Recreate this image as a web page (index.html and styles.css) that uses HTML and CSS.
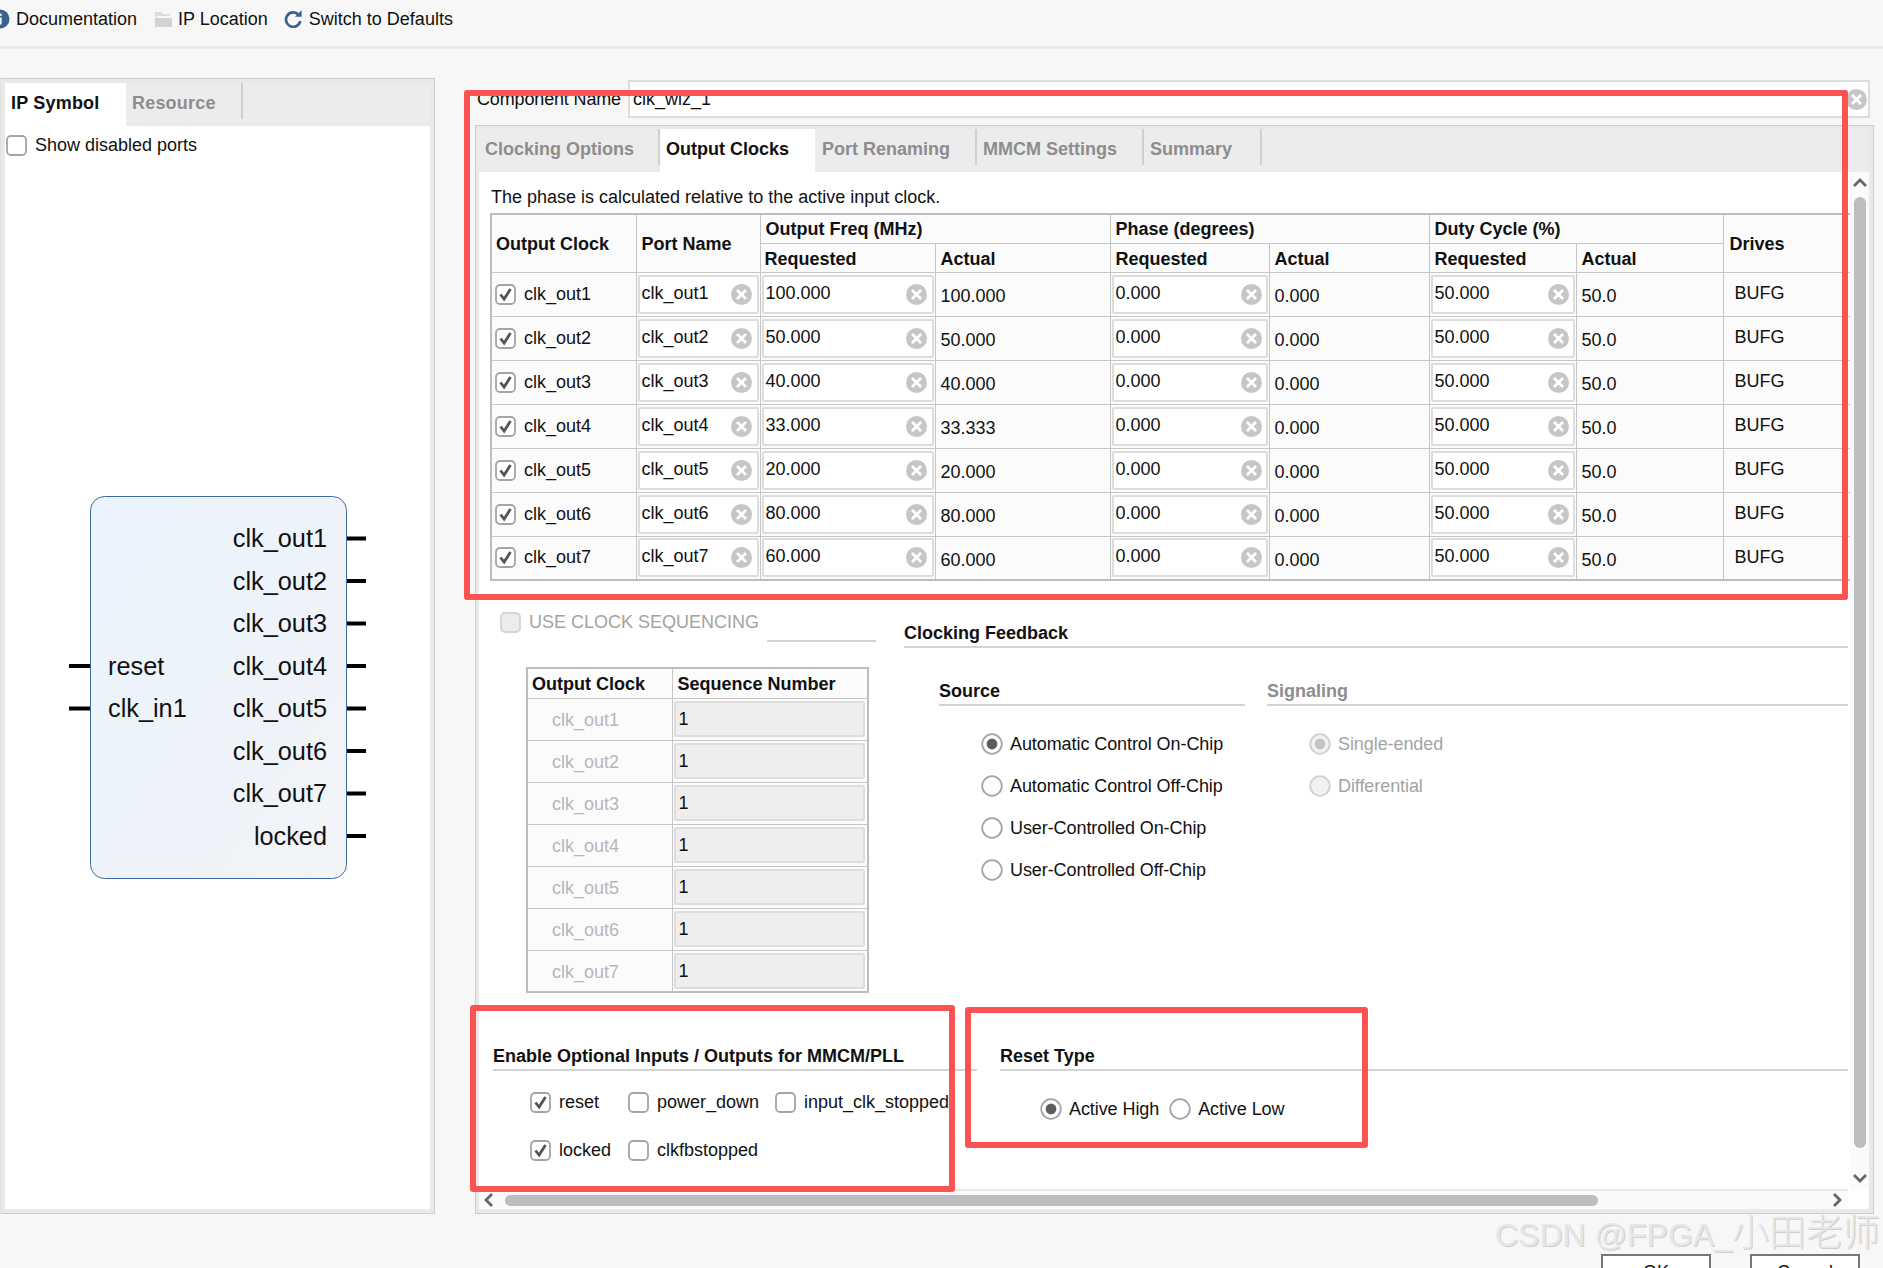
FILE: index.html
```html
<!DOCTYPE html>
<html lang="en">
<head>
<meta charset="utf-8">
<title>Clocking Wizard</title>
<link rel="stylesheet" href="styles.css">
</head>
<body>
<svg class="defs" width="0" height="0">
  <symbol id="x" viewBox="0 0 21 21"><circle cx="10.5" cy="10.5" r="10.5" fill="#c6c6c6"/><path d="M6 6l9 9M15 6l-9 9" stroke="#fff" stroke-width="2.8" fill="none"/></symbol>
  <symbol id="on" viewBox="0 0 21 21"><rect x="1" y="1" width="19" height="19" rx="4" fill="#fff" stroke="#a4a4a4" stroke-width="1.8"/><path d="M5.5 10.5l3.6 4.6L15.5 5" fill="none" stroke="#555" stroke-width="2.8"/></symbol>
  <symbol id="off" viewBox="0 0 21 21"><rect x="1" y="1" width="19" height="19" rx="4" fill="#fff" stroke="#a4a4a4" stroke-width="1.8"/></symbol>
  <symbol id="dis" viewBox="0 0 21 21"><rect x="1" y="1" width="19" height="19" rx="4" fill="#ececec" stroke="#d4d4d4" stroke-width="1.8"/></symbol>
  <symbol id="r0" viewBox="0 0 22 22"><circle cx="11" cy="11" r="9.8" fill="#fff" stroke="#a4a4a4" stroke-width="1.8"/></symbol>
  <symbol id="r1" viewBox="0 0 22 22"><circle cx="11" cy="11" r="9.8" fill="#fff" stroke="#a4a4a4" stroke-width="1.8"/><circle cx="11" cy="11" r="5.4" fill="#5c5c5c"/></symbol>
  <symbol id="r2" viewBox="0 0 22 22"><circle cx="11" cy="11" r="9.8" fill="#f2f2f2" stroke="#d0d0d0" stroke-width="1.8"/></symbol>
  <symbol id="r3" viewBox="0 0 22 22"><circle cx="11" cy="11" r="9.8" fill="#f2f2f2" stroke="#d0d0d0" stroke-width="1.8"/><circle cx="11" cy="11" r="5.4" fill="#c4c4c4"/></symbol>
</svg>
<div class="page">
  <header class="toolbar">
    <span class="tool tool-doc"><svg class="ic-info" viewBox="0 0 20 20"><circle cx="10" cy="10" r="9.5" fill="#3c6190"/><rect x="9" y="8.500" width="2.600" height="7" fill="#fff"/><rect x="9" y="4.500" width="2.600" height="2.500" fill="#fff"/></svg>Documentation</span>
    <span class="tool tool-loc"><svg class="ic-16" viewBox="0 0 18 18"><path d="M1 2h6l2 2h7v2H3L1 8z" fill="#dcdcdc"/><path d="M1 8h17v9H1z" fill="#d2d2d2"/></svg>IP Location</span>
    <span class="tool tool-def"><svg class="ic-16" viewBox="0 0 18 18"><path d="M14.600 4.800A7.200 7.200 0 1 0 16.300 11" fill="none" stroke="#3c6190" stroke-width="2.700"/><path d="M11 6.800h6.600V.2z" fill="#3c6190"/></svg>Switch to Defaults</span>
  </header>

  <main class="main">
    <section class="left">
      <nav class="ltabs">
        <span class="ltab ltab-on">IP Symbol</span>
        <span class="ltab ltab-off">Resource</span>
      </nav>
      <div class="lbody">
        <label class="check show"><svg class="cb"><use href="#off"/></svg>Show disabled ports</label>
        <svg class="symbol" width="300" height="390" viewBox="0 0 300 390">
          <defs><linearGradient id="sg" x1="0" y1="0" x2="1" y2="1"><stop offset="0" stop-color="#eaf3fd"/><stop offset="1" stop-color="#f2f4f7"/></linearGradient></defs>
          <rect x="24.500" y="2.500" width="256" height="382" rx="14" fill="url(#sg)" stroke="#3f6aa6"/>
          <g class="pins">
            <path d="M281 44.500h19M281 87h19M281 129.500h19M281 172h19M281 214.500h19M281 257h19M281 299.500h19M281 342h19M3 172h21M3 214.500h21"/>
          </g>
          <g class="portr">
            <text x="261" y="53">clk_out1</text><text x="261" y="96">clk_out2</text><text x="261" y="138">clk_out3</text><text x="261" y="181">clk_out4</text><text x="261" y="223">clk_out5</text><text x="261" y="266">clk_out6</text><text x="261" y="308">clk_out7</text><text x="261" y="351">locked</text>
          </g>
          <g class="portl"><text x="42" y="181">reset</text><text x="42" y="223">clk_in1</text></g>
        </svg>
      </div>
    </section>

    <section class="right">
      <div class="compname">
        <span class="complabel">Component Name</span>
        <div class="compfield">clk_wiz_1<svg class="clr"><use href="#x"/></svg></div>
      </div>
      <div class="wizard">
        <nav class="tabs">
          <span class="tab t1">Clocking Options</span>
          <span class="tab t2">Output Clocks</span>
          <span class="tab t3">Port Renaming</span>
          <span class="tab t4">MMCM Settings</span>
          <span class="tab t5">Summary</span>
        </nav>
        <div class="scrollrow">
          <div class="content">
            <p class="note">The phase is calculated relative to the active input clock.</p>
            <table class="clocks">
              <colgroup><col class="c1"><col class="c2"><col class="c3"><col class="c3"><col class="c4"><col class="c5"><col class="c6"><col class="c6"><col class="c7"></colgroup>
              <thead>
                <tr class="h1"><th rowspan="2">Output Clock</th><th rowspan="2">Port Name</th><th colspan="2">Output Freq (MHz)</th><th colspan="2">Phase (degrees)</th><th colspan="2">Duty Cycle (%)</th><th rowspan="2" class="drv">Drives</th></tr>
                <tr class="h2"><th>Requested</th><th>Actual</th><th>Requested</th><th>Actual</th><th>Requested</th><th>Actual</th></tr>
              </thead>
              <tbody>
                <tr><td><label class="check rowc"><svg class="cb"><use href="#on"/></svg>clk_out1</label></td><td><div class="fld">clk_out1<svg class="clr"><use href="#x"/></svg></div></td><td><div class="fld">100.000<svg class="clr"><use href="#x"/></svg></div></td><td class="act">100.000</td><td><div class="fld">0.000<svg class="clr"><use href="#x"/></svg></div></td><td class="act">0.000</td><td><div class="fld">50.000<svg class="clr"><use href="#x"/></svg></div></td><td class="act">50.0</td><td class="bufg">BUFG</td></tr>
                <tr><td><label class="check rowc"><svg class="cb"><use href="#on"/></svg>clk_out2</label></td><td><div class="fld">clk_out2<svg class="clr"><use href="#x"/></svg></div></td><td><div class="fld">50.000<svg class="clr"><use href="#x"/></svg></div></td><td class="act">50.000</td><td><div class="fld">0.000<svg class="clr"><use href="#x"/></svg></div></td><td class="act">0.000</td><td><div class="fld">50.000<svg class="clr"><use href="#x"/></svg></div></td><td class="act">50.0</td><td class="bufg">BUFG</td></tr>
                <tr><td><label class="check rowc"><svg class="cb"><use href="#on"/></svg>clk_out3</label></td><td><div class="fld">clk_out3<svg class="clr"><use href="#x"/></svg></div></td><td><div class="fld">40.000<svg class="clr"><use href="#x"/></svg></div></td><td class="act">40.000</td><td><div class="fld">0.000<svg class="clr"><use href="#x"/></svg></div></td><td class="act">0.000</td><td><div class="fld">50.000<svg class="clr"><use href="#x"/></svg></div></td><td class="act">50.0</td><td class="bufg">BUFG</td></tr>
                <tr><td><label class="check rowc"><svg class="cb"><use href="#on"/></svg>clk_out4</label></td><td><div class="fld">clk_out4<svg class="clr"><use href="#x"/></svg></div></td><td><div class="fld">33.000<svg class="clr"><use href="#x"/></svg></div></td><td class="act">33.333</td><td><div class="fld">0.000<svg class="clr"><use href="#x"/></svg></div></td><td class="act">0.000</td><td><div class="fld">50.000<svg class="clr"><use href="#x"/></svg></div></td><td class="act">50.0</td><td class="bufg">BUFG</td></tr>
                <tr><td><label class="check rowc"><svg class="cb"><use href="#on"/></svg>clk_out5</label></td><td><div class="fld">clk_out5<svg class="clr"><use href="#x"/></svg></div></td><td><div class="fld">20.000<svg class="clr"><use href="#x"/></svg></div></td><td class="act">20.000</td><td><div class="fld">0.000<svg class="clr"><use href="#x"/></svg></div></td><td class="act">0.000</td><td><div class="fld">50.000<svg class="clr"><use href="#x"/></svg></div></td><td class="act">50.0</td><td class="bufg">BUFG</td></tr>
                <tr><td><label class="check rowc"><svg class="cb"><use href="#on"/></svg>clk_out6</label></td><td><div class="fld">clk_out6<svg class="clr"><use href="#x"/></svg></div></td><td><div class="fld">80.000<svg class="clr"><use href="#x"/></svg></div></td><td class="act">80.000</td><td><div class="fld">0.000<svg class="clr"><use href="#x"/></svg></div></td><td class="act">0.000</td><td><div class="fld">50.000<svg class="clr"><use href="#x"/></svg></div></td><td class="act">50.0</td><td class="bufg">BUFG</td></tr>
                <tr><td><label class="check rowc"><svg class="cb"><use href="#on"/></svg>clk_out7</label></td><td><div class="fld">clk_out7<svg class="clr"><use href="#x"/></svg></div></td><td><div class="fld">60.000<svg class="clr"><use href="#x"/></svg></div></td><td class="act">60.000</td><td><div class="fld">0.000<svg class="clr"><use href="#x"/></svg></div></td><td class="act">0.000</td><td><div class="fld">50.000<svg class="clr"><use href="#x"/></svg></div></td><td class="act">50.0</td><td class="bufg">BUFG</td></tr>
              </tbody>
            </table>

            <div class="lower">
              <div class="seqcol">
                <div class="seqhead">
                  <label class="check seqcheck"><svg class="cb"><use href="#dis"/></svg>USE CLOCK SEQUENCING</label>
                  <span class="seqline"></span>
                </div>
                <table class="seq">
                  <colgroup><col class="s1"><col class="s2"></colgroup>
                  <thead><tr><th>Output Clock</th><th>Sequence Number</th></tr></thead>
                  <tbody>
                    <tr><td class="sname">clk_out1</td><td><div class="sfld">1</div></td></tr>
                    <tr><td class="sname">clk_out2</td><td><div class="sfld">1</div></td></tr>
                    <tr><td class="sname">clk_out3</td><td><div class="sfld">1</div></td></tr>
                    <tr><td class="sname">clk_out4</td><td><div class="sfld">1</div></td></tr>
                    <tr><td class="sname">clk_out5</td><td><div class="sfld">1</div></td></tr>
                    <tr><td class="sname">clk_out6</td><td><div class="sfld">1</div></td></tr>
                    <tr><td class="sname">clk_out7</td><td><div class="sfld">1</div></td></tr>
                  </tbody>
                </table>
              </div>
              <div class="fbcol">
                <h3 class="title">Clocking Feedback</h3>
                <div class="fbrow">
                  <div class="source">
                    <h3 class="title">Source</h3>
                    <div class="radios">
                      <label class="radio"><svg class="rd"><use href="#r1"/></svg>Automatic Control On-Chip</label>
                      <label class="radio"><svg class="rd"><use href="#r0"/></svg>Automatic Control Off-Chip</label>
                      <label class="radio"><svg class="rd"><use href="#r0"/></svg>User-Controlled On-Chip</label>
                      <label class="radio"><svg class="rd"><use href="#r0"/></svg>User-Controlled Off-Chip</label>
                    </div>
                  </div>
                  <div class="signal">
                    <h3 class="title title-off">Signaling</h3>
                    <div class="radios radios-sig">
                      <label class="radio radio-off"><svg class="rd"><use href="#r3"/></svg>Single-ended</label>
                      <label class="radio radio-off"><svg class="rd"><use href="#r2"/></svg>Differential</label>
                    </div>
                  </div>
                </div>
              </div>
            </div>

            <div class="bottom">
              <div class="opt">
                <h3 class="title">Enable Optional Inputs / Outputs for MMCM/PLL</h3>
                <div class="optgrid">
                  <label class="check"><svg class="cb"><use href="#on"/></svg>reset</label>
                  <label class="check"><svg class="cb"><use href="#off"/></svg>power_down</label>
                  <label class="check"><svg class="cb"><use href="#off"/></svg>input_clk_stopped</label>
                  <label class="check"><svg class="cb"><use href="#on"/></svg>locked</label>
                  <label class="check"><svg class="cb"><use href="#off"/></svg>clkfbstopped</label>
                </div>
              </div>
              <div class="rst">
                <h3 class="title">Reset Type</h3>
                <div class="rstrow">
                  <label class="radio"><svg class="rd"><use href="#r1"/></svg>Active High</label>
                  <label class="radio"><svg class="rd"><use href="#r0"/></svg>Active Low</label>
                </div>
              </div>
            </div>
          </div>
          <div class="vscroll">
            <svg class="chev" viewBox="0 0 14 9"><path d="M1 8l6-6 6 6" fill="none" stroke="#666" stroke-width="2.800"/></svg>
            <span class="vthumb"></span>
            <svg class="chev" viewBox="0 0 14 9"><path d="M1 1l6 6 6-6" fill="none" stroke="#666" stroke-width="2.800"/></svg>
          </div>
        </div>
        <div class="hrow">
          <div class="hscroll">
            <svg class="chevh" viewBox="0 0 9 14"><path d="M8 1L2 7l6 6" fill="none" stroke="#666" stroke-width="2.800"/></svg>
            <span class="hthumb"></span>
            <svg class="chevh" viewBox="0 0 9 14"><path d="M1 1l6 6-6 6" fill="none" stroke="#666" stroke-width="2.800"/></svg>
          </div>
          <span class="corner"></span>
        </div>
      </div>
    </section>
  </main>

  <footer class="foot">
    <button class="btn">OK</button>
    <button class="btn">Cancel</button>
  </footer>

  <span class="mark m1"></span>
  <span class="mark m2"></span>
  <span class="mark m3"></span>
  <span class="wm">CSDN @FPGA_<span class="wmc">小田老师</span></span>
</div>
</body>
</html>
```

FILE: styles.css
```css
* { box-sizing: border-box; }
html, body { margin: 0; padding: 0; }
body { font-family: "Liberation Sans", Arial, "Noto Sans CJK SC", sans-serif; font-size: 18px; color: #111; background: #f7f7f7; }
.defs { position: absolute; }
.page { position: relative; width: 1883px; height: 1268px; overflow: hidden; display: flex; flex-direction: column; background: #f7f7f7; }

.toolbar { height: 49px; flex: none; display: flex; align-items: flex-start; border-bottom: 3px solid #ebebeb; padding-top: 9px; }
.tool { display: flex; align-items: center; height: 20px; white-space: nowrap; }
.tool-doc { margin-left: -10px; }
.ic-info { width: 20px; height: 20px; margin-right: 6px; }
.ic-16 { width: 18px; height: 18px; margin-right: 6px; }
.tool-loc { margin-left: 17px; }
.tool-def { margin-left: 16px; }
.tool-def .ic-16 { margin-right: 7px; }

.main { display: flex; gap: 41px; padding-top: 29px; flex: none; height: 1165px; }

.left { width: 435px; height: 1136px; border: 1px solid #cdcdcd; border-left-color: #e0e0e0; padding: 4px; background: #e9e9e9; display: flex; flex-direction: column; }
.ltabs { display: flex; height: 43px; flex: none; background: #ececec; align-items: flex-start; font-weight: bold; letter-spacing: .2px; }
.ltab { display: block; line-height: 40px; padding-left: 6px; }
.ltab-on { width: 121px; height: 43px; background: #fff; color: #111; }
.ltab-off { width: 117px; height: 36px; color: #8d8d8d; border-right: 2px solid #cfcfcf; }
.lbody { flex: 1; background: #fff; padding: 9px 0 0 1px; }

.check { display: flex; align-items: center; gap: 8px; white-space: nowrap; height: 21px; }
.cb { width: 21px; height: 21px; flex: none; }
.symbol { display: block; margin: 338px 0 0 60px; }
.pins path { stroke: #000; stroke-width: 4; fill: none; }
.portr text, .portl text { font-family: "Liberation Sans", Arial, sans-serif; font-size: 25.3px; fill: #111; }
.portr text { text-anchor: end; }

.right { width: 1399px; margin-left: -1px; display: flex; flex-direction: column; }
.compname { display: flex; align-items: center; height: 38px; margin-top: 2px; padding-left: 2px; flex: none; }
.complabel { width: 151px; white-space: nowrap; letter-spacing: -.15px; }
.compfield { width: 1242px; height: 38px; background: #fff; border: 2px solid #ddd; display: flex; align-items: center; justify-content: space-between; padding-left: 3px; padding-right: 1px; }
.clr { width: 21px; height: 21px; flex: none; }

.wizard { margin-top: 7px; height: 1089px; flex: none; border: 1px solid #cdcdcd; padding: 3px 4px 4px 3px; background: #e9e9e9; display: flex; flex-direction: column; }
.tabs { display: flex; height: 43px; flex: none; background: #ececec; align-items: flex-start; font-weight: bold; }
.tab { display: block; height: 36px; line-height: 40px; color: #8d8d8d; border-right: 2px solid #cfcfcf; padding-left: 6px; white-space: nowrap; }
.t1 { width: 181px; }
.t2 { width: 155px; height: 43px; background: #fff; color: #111; border: 0; }
.t3 { width: 162px; padding-left: 7px; }
.t4 { width: 167px; }
.t5 { width: 118px; }

.scrollrow { display: flex; height: 1017px; flex: none; }
.content { width: 1371px; background: #fff; padding: 16px 0 0 11px; overflow: hidden; flex: none; }
.note { margin: 0 0 6px 1px; line-height: 19px; white-space: nowrap; }

table { border-collapse: collapse; table-layout: fixed; background: #fbfbfb; }
th { font-weight: bold; text-align: left; padding: 2px 0 0 5px; white-space: nowrap; }
th, td { border: 1px solid #c6c6c6; }
.clocks { width: 1360px; border: 2px solid #bdbdbd; }
.c1 { width: 145px; } .c2 { width: 124px; } .c3 { width: 175px; } .c4 { width: 159px; } .c5 { width: 160px; } .c6 { width: 147px; } .c7 { width: 128px; }
.h1 { height: 29px; }
.h2 { height: 29px; }
.clocks .h2 th { padding-top: 4px; }
.clocks th:first-child { padding-left: 4px; }
.clocks th.drv { padding-left: 6px; }
.clocks td { height: 44px; padding: 0; white-space: nowrap; }
.rowc { padding-left: 3px; }
.fld { height: 39px; margin: 0 1px; background: #fff; border: 2px solid #ddd; border-radius: 2px; display: flex; align-items: center; justify-content: space-between; padding: 0 4px 2px 2px; }
.clocks td:nth-child(2) .fld, .clocks td:nth-child(3) .fld { padding-right: 5px; }
.fld .clr { margin-top: 2px; }
.clocks td.act { padding: 5px 0 0 5px; }
.clocks td.bufg { padding: 0 0 1px 11px; }

.lower { display: flex; }
.seqcol { width: 414px; flex: none; }
.seqhead { display: flex; align-items: flex-end; height: 61px; }
.seqcheck { color: #a3a3a3; margin: 0 0 9px 10px; }
.seqline { width: 109px; height: 2px; background: #d4d4d4; margin-left: 8px; }
.seq { width: 341px; margin: 25px 0 0 36px; border: 2px solid #bdbdbd; }
.s1 { width: 145px; } .s2 { width: 196px; }
.seq th { height: 30px; }
.seq th:first-child { padding-left: 4px; }
.seq td { height: 42px; padding: 0; }
.seq td.sname { color: #b7b7b7; padding: 3px 0 0 24px; }
.sfld { height: 36px; margin: 2px 2px 2px 1px; background: #eee; border: 2px solid #ddd; border-radius: 2px; line-height: 32px; padding-left: 3px; }

.title { margin: 0; font-size: 18px; font-weight: bold; line-height: 20px; padding-bottom: 3px; border-bottom: 2px solid #d4d4d4; white-space: nowrap; }
.title-off { color: #8d8d8d; }
.fbcol { width: 944px; flex: none; padding-top: 42px; }
.fbrow { display: flex; gap: 22px; padding: 33px 0 0 35px; }
.source { width: 306px; flex: none; }
.signal { flex: 1; }
.radios { display: flex; flex-direction: column; gap: 20px; padding: 27px 0 0 42px; }
.radio { display: flex; align-items: center; gap: 7px; height: 22px; white-space: nowrap; letter-spacing: -.08px; }
.rd { width: 22px; height: 22px; flex: none; }
.radio-off { color: #a3a3a3; }
.radios-sig { padding-left: 42px; }

.bottom { display: flex; gap: 23px; margin-top: 53px; padding-left: 3px; }
.opt { width: 484px; flex: none; }
.rst { width: 848px; flex: none; }
.optgrid { display: grid; grid-template-columns: 98px 147px auto; row-gap: 27px; padding: 21px 0 0 37px; }
.rstrow { display: flex; padding: 27px 0 0 40px; gap: 10px; }

.vscroll { flex: 1; background: #fafafa; display: flex; flex-direction: column; align-items: center; padding-top: 6px; }
.chev { width: 14px; height: 9px; flex: none; }
.vthumb { width: 12px; height: 951px; background: #bdbdbd; border-radius: 6px; margin: 10px 0 26px; flex: none; }
.hrow { display: flex; height: 20px; flex: none; }
.hscroll { width: 1369px; background: #fafafa; border-top: 2px solid #e8e8e8; display: flex; align-items: center; padding-left: 5px; }
.chevh { width: 9px; height: 14px; flex: none; }
.hthumb { width: 1093px; height: 11px; border-radius: 6px; background: #bdbdbd; margin: 0 235px 0 12px; flex: none; }
.corner { flex: 1; background: #fff; }

.foot { display: flex; justify-content: flex-end; gap: 39px; padding: 40px 23px 0 0; flex: none; }
.btn { width: 110px; height: 44px; flex: none; background: #fff; border: 2px solid #777; border-radius: 0; font: 18px "Liberation Sans", Arial, sans-serif; color: #111; padding: 0 0 8px; display: block; }

.mark { position: absolute; border: 6px solid #fb5252; border-radius: 3px; pointer-events: none; }
.m1 { left: 464px; top: 90px; width: 1384px; height: 510px; }
.m2 { left: 470px; top: 1005px; width: 485px; height: 187px; }
.m3 { left: 965px; top: 1007px; width: 403px; height: 141px; }
.wm { position: absolute; left: 1495px; top: 1211px; font-size: 32px; line-height: 46px; color: #e6e6e6; text-shadow: 1px 1px 0 #cfcfcf; white-space: nowrap; font-family: "Liberation Sans", "Noto Sans CJK SC", sans-serif; }
.wmc { font-size: 37px; font-weight: 300; }
```
